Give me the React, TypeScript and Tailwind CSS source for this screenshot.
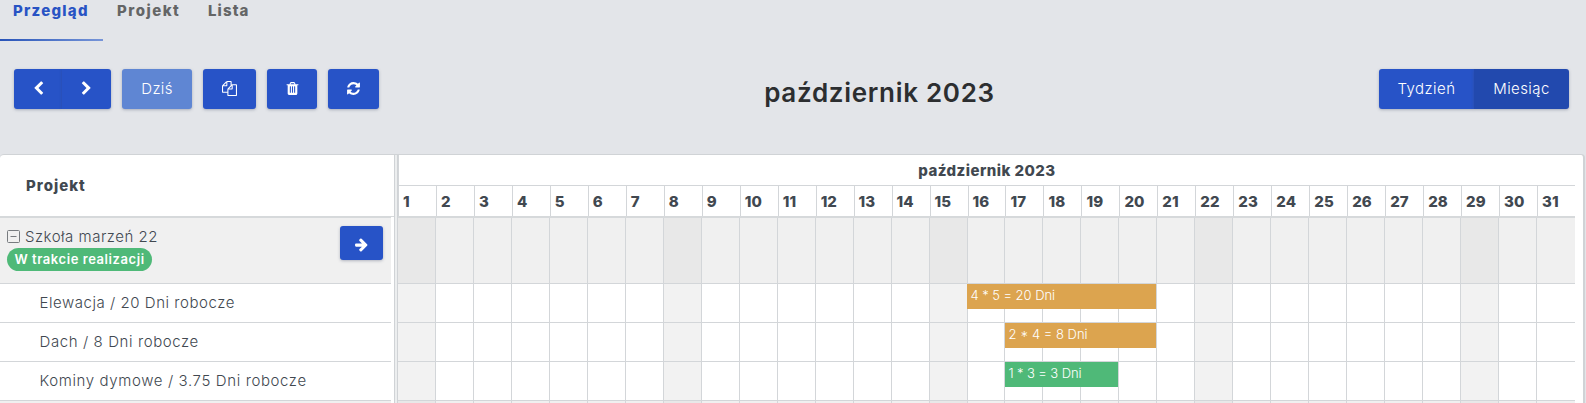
import type { ReactNode } from 'react';

const ICONS = {
  left: 'M1427 301l-531 531 531 531q19 19 19 45t-19 45l-166 166q-19 19-45 19t-45-19l-742-742q-19-19-19-45t19-45l742-742q19-19 45-19t45 19l166 166q19 19 19 45t-19 45z',
  right: 'M1363 877l-742 742q-19 19-45 19t-45-19l-166-166q-19-19-19-45t19-45l531-531-531-531q-19-19-19-45t19-45l166-166q19-19 45-19t45 19l742 742q19 19 19 45t-19 45z',
  copy: 'M1696 384q40 0 68 28t28 68v1216q0 40-28 68t-68 28h-960q-40 0-68-28t-28-68v-288h-544q-40 0-68-28t-28-68v-672q0-40 20-88t48-76l408-408q28-28 76-48t88-20h416q40 0 68 28t28 68v328q68-40 128-40h416zm-544 213l-299 299h299v-299zm-640-384l-299 299h299v-299zm196 647l316-316v-416h-384v416q0 40-28 68t-68 28h-416v640h512v-256q0-40 20-88t48-76zm956 804v-1152h-384v416q0 40-28 68t-68 28h-416v640h896z',
  trash: 'M704 1376v-704q0-14-9-23t-23-9h-64q-14 0-23 9t-9 23v704q0 14 9 23t23 9h64q14 0 23-9t9-23zm256 0v-704q0-14-9-23t-23-9h-64q-14 0-23 9t-9 23v704q0 14 9 23t23 9h64q14 0 23-9t9-23zm256 0v-704q0-14-9-23t-23-9h-64q-14 0-23 9t-9 23v704q0 14 9 23t23 9h64q14 0 23-9t9-23zm-544-992h448l-48-117q-7-9-17-11h-317q-10 2-17 11zm928 32v64q0 14-9 23t-23 9h-96v948q0 83-47 143.500t-113 60.500h-832q-66 0-113-58.500t-47-141.500v-952h-96q-14 0-23-9t-9-23v-64q0-14 9-23t23-9h309l70-167q15-37 54-63t79-26h320q40 0 79 26t54 63l70 167h309q14 0 23 9t9 23z',
  refresh: 'M1639 1056q0 5-1 7-64 268-268 434.500t-478 166.500q-146 0-282.500-55t-243.500-157l-129 129q-19 19-45 19t-45-19-19-45v-448q0-26 19-45t45-19h448q26 0 45 19t19 45-19 45l-137 137q71 66 161 102t187 36q134 0 250-65t186-179q11-17 53-117 8-23 30-23h192q13 0 22.500 9.500t9.500 22.500zm25-800v448q0 26-19 45t-45 19h-448q-26 0-45-19t-19-45 19-45l138-138q-148-137-349-137-134 0-250 65t-186 179q-11 17-53 117-8 23-30 23h-199q-13 0-22.500-9.500t-9.500-22.500v-7q65-268 270-434.500t480-166.500q146 0 284 55.500t245 156.500l130-129q19-19 45-19t45 19 19 45z',
  arrow: 'M1600 960q0 54-37 91l-651 651q-39 37-91 37-51 0-90-37l-75-75q-38-38-38-91t38-91l293-293h-704q-52 0-84.500-37.500t-32.500-90.500v-128q0-53 32.500-90.500t84.500-37.500h704l-293-294q-38-36-38-90t38-90l75-75q38-38 90-38 53 0 91 38l651 651q37 35 37 90z',
};

function Icon({ name, className = 'size-[15px]' }: { name: keyof typeof ICONS; className?: string }) {
  return (
    <svg viewBox="0 0 1792 1792" fill="currentColor" className={className}>
      <path d={ICONS[name]} />
    </svg>
  );
}

function Button({ className, children }: { className: string; children: ReactNode }) {
  return (
    <button className={`flex h-10 items-center justify-center shadow-[0_1px_3px_rgba(60,70,100,0.35)] ${className}`}>
      {children}
    </button>
  );
}

const DAYS = Array.from({ length: 31 }, (_, i) => i + 1);
const GRID = 'grid w-[1177px] grid-cols-[repeat(31,minmax(0,1fr))]';

const TASKS = [
  { name: 'Elewacja / 20 Dni robocze', track: 'tracking-[0.54px]', label: '4 * 5 = 20 Dni', bar: 'ml-[569px] w-[189px] bg-[#dca44f] tracking-[-0.05px]' },
  { name: 'Dach / 8 Dni robocze', track: 'tracking-[0.6px]', label: '2 * 4 = 8 Dni', bar: 'ml-[607px] w-[151px] bg-[#dca44f]' },
  { name: 'Kominy dymowe / 3.75 Dni robocze', track: 'tracking-[0.62px]', label: '1 * 3 = 3 Dni', bar: 'ml-[607px] w-[113px] bg-[#4fb978] tracking-[-0.1px]' },
];

function DayCells({ shaded, height }: { shaded?: boolean; height: string }) {
  return (
    <div className={`${GRID} ${height}`}>
      {DAYS.map((d) => {
        const sunday = d % 7 === 1;
        const bg = shaded ? (sunday ? 'bg-[#e8e8e8]' : 'bg-[#f0f0f0]') : sunday ? 'bg-[#f2f2f2]' : 'bg-white';
        return <div key={d} className={`border-b border-[#d3d6d9] ${d < 31 ? 'border-r' : ''} ${bg}`} />;
      })}
    </div>
  );
}

export default function App() {
  return (
    <div className="flex h-[403px] w-[1586px] flex-col overflow-hidden bg-[#e3e5e9] font-['Inter',sans-serif] text-[#414850]">
      <nav className="flex h-[41px] shrink-0 text-[15px] leading-[22px] font-extrabold text-[#646566]">
        <div className="flex w-[103px] flex-col justify-between pl-[13px]">
          <span className="whitespace-nowrap tracking-[1.25px] text-[#2853c4]">Przegląd</span>
          <div className="-ml-[13px] h-[2px] bg-linear-to-r from-[#2853b8] to-[#7795d8]" />
        </div>
        <span className="ml-[14px] w-[91px] tracking-[1.5px]">Projekt</span>
        <span className="tracking-[1.1px]">Lista</span>
      </nav>

      <div className="flex h-[113px] shrink-0 justify-between pt-7 pr-[17px] pl-[14px] text-[15px] text-white">
        <div className="flex w-[365px]">
          <Button className="w-[48px] rounded-l-[3px] bg-[#2753c7] pb-px"><Icon name="left" /></Button>
          <Button className="w-[49px] rounded-r-[3px] bg-[#2753c7] pb-px"><Icon name="right" /></Button>
          <Button className="ml-[11px] w-[70px] rounded-[3px] bg-[#5f86d3] font-light tracking-[0.3px]">Dziś</Button>
          <Button className="ml-[11px] w-[53px] rounded-[3px] bg-[#2753c7] pb-px"><Icon name="copy" /></Button>
          <Button className="ml-[11px] w-[50px] rounded-[3px] bg-[#2753c7] pb-px"><Icon name="trash" /></Button>
          <Button className="ml-[11px] w-[51px] rounded-[3px] bg-[#2753c7] pb-px"><Icon name="refresh" /></Button>
        </div>
        <h1 className="mr-[199px] ml-[200px] pt-[6px] text-[26px] leading-[36px] font-semibold tracking-[0.7px] whitespace-nowrap text-[#2c2e30]">
          październik 2023
        </h1>
        <div className="flex">
          <Button className="w-[95px] rounded-l-[3px] bg-[#2753c7] font-light tracking-[0.45px]">Tydzień</Button>
          <Button className="w-[95px] rounded-r-[3px] bg-[#2249ae] font-light tracking-[0.4px]">Miesiąc</Button>
        </div>
      </div>

      <div className="flex h-[260px] w-[1585px] shrink-0 overflow-hidden rounded-t-[4px] border-t border-r-2 border-[#d0d3d6] bg-white">
        <div className="flex w-[394px] shrink-0 flex-col">
          <div className="flex h-[62px] shrink-0 items-center border-b border-[#d6d9db] pt-[2px] pl-[26px] text-[15px] font-extrabold">
            <span className="tracking-[1px]">Projekt</span>
          </div>
          <div className="h-px w-[391px] shrink-0 bg-[#d6d9db]" />
          <div className="flex h-[66px] w-[391px] shrink-0 justify-between border-b border-[#d3d6d9] bg-[#f0f0f0] pt-[7px] pr-2 pl-[7px]">
            <div>
              <div className="flex h-[23px] items-center gap-[5px] pt-px text-[15px] font-light">
                <svg viewBox="0 0 13 13" className="mb-[2px] size-[13px]" fill="none" stroke="#777b7f">
                  <rect x="0.5" y="0.5" width="12" height="12" rx="1" />
                  <path d="M3.500 6.500h6" />
                </svg>
                <span className="tracking-[0.5px]">Szkoła marzeń 22</span>
              </div>
              <div className="flex h-[23px] w-[145px] items-center justify-center rounded-full bg-[#4fb978] text-[13px] font-semibold tracking-[0.57px] whitespace-nowrap text-white">
                W trakcie realizacji
              </div>
            </div>
            <button className="mt-px flex h-[34px] w-[43px] items-center justify-center rounded-[3px] bg-[#2753c7] pt-[2px] text-white shadow-[0_1px_3px_rgba(60,70,100,0.35)]">
              <Icon name="arrow" />
            </button>
          </div>
          {TASKS.map((t) => (
            <div key={t.name} className="flex h-[39px] w-[391px] shrink-0 items-center border-b border-[#d3d6d9] pl-[39.5px] text-[15px] font-light whitespace-nowrap">
              <span className={t.track}>{t.name}</span>
            </div>
          ))}
          <div className="h-3 w-[391px] bg-[#f0f0f0]" />
        </div>

        <div className="w-[4px] shrink-0 border-r border-l border-[#d0d3d6] bg-[#eceeef]" />

        <div className="flex w-[1185px] shrink-0 flex-col">
          <div className="h-[63px] w-[1177px] shrink-0 border-b-2 border-[#d6d9db] text-[15px] font-extrabold">
            <div className="flex h-[31px] items-center justify-center border-b border-l border-[#d3d6d9] pt-[2px]">
              <span className="tracking-[0.45px]">październik 2023</span>
            </div>
            <div className={`${GRID} h-[30px]`}>
              {DAYS.map((d) => (
                <div key={d} className="flex items-center border-l border-[#d3d6d9] pt-[2px] pl-[4px] tracking-[0.1px]">
                  {d}
                </div>
              ))}
            </div>
          </div>
          <DayCells shaded height="h-[66px]" />
          {TASKS.map((t) => (
            <div key={t.name} className="grid h-[39px] shrink-0">
              <div className="col-start-1 row-start-1"><DayCells height="h-[39px]" /></div>
              <div className={`col-start-1 row-start-1 h-[25px] pl-[3.5px] text-[13px] leading-[23px] font-light whitespace-nowrap text-white ${t.bar}`}>
                {t.label}
              </div>
            </div>
          ))}
          <DayCells shaded height="h-3" />
        </div>
      </div>
    </div>
  );
}
